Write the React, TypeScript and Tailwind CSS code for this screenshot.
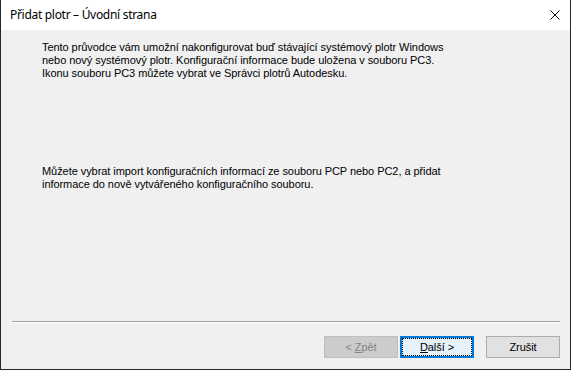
import React from 'react';

const ui = { fontFamily: '"Liberation Sans", Arial, sans-serif' };

function Button({ children, variant }: { children: React.ReactNode; variant: 'disabled' | 'default' | 'normal' }) {
  if (variant === 'disabled') {
    return (
      <div className="w-[74px] h-[22px] flex items-center justify-center bg-[#cccccc] border border-[#bfbfbf] text-[#838383] text-[11px]">
        {children}
      </div>
    );
  }
  if (variant === 'default') {
    return (
      <div className="w-[74px] h-[22px] p-[1px] bg-[#e5f1fb] border border-[#0078d7] ring-1 ring-inset ring-[#0078d7]">
        <div className="w-full h-full flex items-center justify-center border border-dotted border-black text-[11px] text-black">
          {children}
        </div>
      </div>
    );
  }
  return (
    <div className="w-[74px] h-[22px] flex items-center justify-center bg-[#e1e1e1] border border-[#adadad] text-[11px] text-black">
      {children}
    </div>
  );
}

export default function App() {
  return (
    <div className="w-[571px] h-[370px] flex flex-col bg-[#f0f0f0] border-x border-b border-[#23272e] overflow-hidden" style={ui}>
      {/* title bar */}
      <div className="h-[30px] shrink-0 bg-white flex items-center justify-between pl-[9px] pr-[10px]">
        <span className="text-[12px] text-black leading-none tracking-[-0.3px]" style={{ fontFamily: '"Noto Sans", "Open Sans", sans-serif' }}>
          Přidat plotr – Úvodní strana
        </span>
        <svg width="10" height="10" viewBox="0 0 10 10" className="mb-[1px]">
          <path d="M0.5 0.5 L9.5 9.5 M9.5 0.5 L0.5 9.5" stroke="#000" strokeWidth="1" fill="none" />
        </svg>
      </div>

      {/* body */}
      <div className="flex-1 flex flex-col text-[11px] leading-[13px] text-black tracking-[-0.06px]">
        <div className="pl-[41px] pt-[11px]">
          <p>Tento průvodce vám umožní nakonfigurovat buď stávající systémový plotr Windows</p>
          <p>nebo nový systémový plotr. Konfigurační informace bude uložena v souboru PC3.</p>
          <p>Ikonu souboru PC3 můžete vybrat ve Správci plotrů Autodesku.</p>
        </div>
        <div className="pl-[41px] pt-[85px]">
          <p>Můžete vybrat import konfiguračních informací ze souboru PCP nebo PC2, a přidat</p>
          <p>informace do nově vytvářeného konfiguračního souboru.</p>
        </div>
        <div className="flex-1" />
        <div className="ml-[11px] mr-[10px] border-t border-[#a0a0a0] border-b border-b-white" />
        <div className="flex justify-end items-center pt-[13px] pb-[11px] pr-[10px]">
          <div className="flex gap-[2px]">
            <Button variant="disabled">
              &lt; <span className="underline ml-[3px]">Z</span>pět
            </Button>
            <Button variant="default">
              <span className="underline">D</span>alší &gt;
            </Button>
          </div>
          <div className="ml-[12px]">
            <Button variant="normal">Zrušit</Button>
          </div>
        </div>
      </div>
    </div>
  );
}
